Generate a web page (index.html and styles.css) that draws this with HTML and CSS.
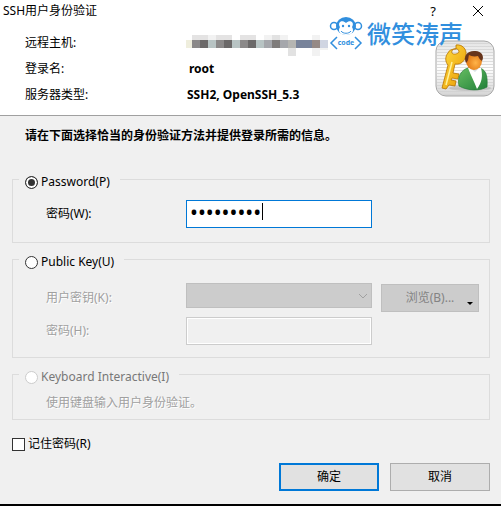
FILE: index.html
```html
<!DOCTYPE html>
<html lang="zh-CN">
<head>
    <meta charset="UTF-8">
    <meta name="viewport" content="width=device-width, initial-scale=1.0">
    <title>SSH用户身份验证</title>
    <link rel="stylesheet" href="styles.css">
</head>
<body>
    <form class="dialog">
        <header class="header">
            <div class="titlebar">
                <h1>SSH用户身份验证</h1>
                <button type="button" class="title-btn" aria-label="帮助">?</button>
                <button type="button" class="title-btn" aria-label="关闭">
                    <svg width="12" height="12" viewBox="0 0 12 12"><path d="M1 1l10 10M11 1L1 11" stroke="#000" fill="none"/></svg>
                </button>
            </div>
            <div class="summary">
                <dl class="info">
                    <dt>远程主机:</dt>
                    <dd>
                        <!-- host address is masked -->
                        <svg class="mask" width="142" height="21" viewBox="0 0 142 21" shape-rendering="crispEdges">
                            <path fill="#e4e3e3" d="M6 0h16v5H6zM30 0h16v5H30zM54 0h16v5H54z"/>
                            <path fill="#f2f2f2" d="M22 0h8v5h-8zM78 0h24v5H78zM126 0h8v5h-8zM126 13h8v8h-8zM134 13h8v2h-8z"/>
                            <path fill="#e2e2e2" d="M86 0h8v5h-8zM102 13h8v8h-8z"/>
                            <path fill="#efeedd" d="M0 5h6v8H0z"/>
                            <path fill="#8b8989" d="M6 5h8v8H6zM30 5h8v8h-8zM54 5h8v8h-8z"/>
                            <path fill="#6b6969" d="M14 5h8v8h-8zM38 5h8v8h-8zM62 5h8v8h-8z"/>
                            <path fill="#b8c4c4" d="M22 5h8v8h-8zM46 5h8v8h-8zM70 5h8v8h-8z"/>
                            <path fill="#a5a7ac" d="M78 5h8v8h-8zM94 5h8v8h-8z"/>
                            <path fill="#7f7c7b" d="M86 5h8v8h-8z"/>
                            <path fill="#b5b5b2" d="M102 5h8v8h-8z"/>
                            <path fill="#78839a" d="M110 5h16v8h-16z"/>
                            <path fill="#958985" d="M126 5h8v8h-8z"/>
                            <path fill="#d0d5e2" d="M134 5h8v8h-8z"/>
                        </svg>
                    </dd>
                    <dt>登录名:</dt>
                    <dd class="login">root</dd>
                    <dt>服务器类型:</dt>
                    <dd>SSH2, OpenSSH_5.3</dd>
                </dl>
                <svg class="user-icon" width="60" height="58" viewBox="0 0 60 58">
                    <defs>
                        <linearGradient id="tile" x1="0" y1="0" x2="0" y2="1">
                            <stop offset="0" stop-color="#e4e4e4"/>
                            <stop offset=".5" stop-color="#fff"/>
                            <stop offset="1" stop-color="#d4d4d4"/>
                        </linearGradient>
                        <linearGradient id="gold" x1="0" y1="0" x2="1" y2="1">
                            <stop offset="0" stop-color="#ffdf43"/>
                            <stop offset="1" stop-color="#e89500"/>
                        </linearGradient>
                        <linearGradient id="jacket" x1="0" y1="0" x2="1" y2="1">
                            <stop offset="0" stop-color="#67bd62"/>
                            <stop offset="1" stop-color="#218039"/>
                        </linearGradient>
                        <radialGradient id="face" cx=".6" cy=".6" r=".6">
                            <stop offset="0" stop-color="#ffb449"/>
                            <stop offset="1" stop-color="#df7310"/>
                        </radialGradient>
                        <pattern id="lines" width="4" height="3" patternUnits="userSpaceOnUse">
                            <path d="M0 .5h4" stroke="#d0d0d0" stroke-width=".7"/>
                        </pattern>
                    </defs>
                    <rect x="1" y="1" width="58" height="55" rx="10" fill="url(#tile)" stroke="#a7a7a7"/>
                    <rect x="2" y="2" width="56" height="53" rx="9" fill="url(#lines)"/>
                    <ellipse cx="35" cy="48" rx="21" ry="3" fill="#aaa" opacity=".5"/>
                    <path fill="url(#gold)" stroke="#b87300" stroke-width=".8" fill-rule="evenodd" d="M21 5c6-1 11 4 10 10-1 6-5 10-11 9l-2 9 6 1-1 5-6-1-1 2 5 1-1 5-6-1-3 4-4-1 6-23c-3-3-3-9 0-12 1-3 4-4 8-4zM22 9c-3-1-6 1-5 4 1 2 6 1 7-1 0-1-1-3-2-3z"/>
                    <path d="M17 22l-6 23" stroke="#fff29a" stroke-width="1.5" fill="none"/>
                    <path fill="url(#jacket)" stroke="#237b36" stroke-width=".7" d="M24 46c-2-9 2-16 9-18h11c6 1 9 6 8 19-7 4-19 4-28-1z"/>
                    <path fill="#fff" d="M33 28h13c2 8 1 14-4 21-3-8-6-13-9-21z"/>
                    <path fill="#d9dfe2" d="M35 28h9l-4 4z"/>
                    <ellipse cx="39" cy="21" rx="8" ry="9" fill="url(#face)"/>
                    <path fill="#67351c" d="M31 23c-3-7 1-12 8-12 7-1 11 5 8 10-2-1-3-3-4-5-4 1-7 0-9-1-1 3 0 5-3 8z"/>
                </svg>
            </div>
            <div class="watermark">
                <svg width="34" height="34" viewBox="0 0 34 34" fill="none" stroke="#318fde">
                    <circle cx="5" cy="9" r="3.500" stroke-width="1.500"/>
                    <circle cx="29" cy="9" r="3.500" stroke-width="1.500"/>
                    <ellipse cx="17" cy="9" rx="10" ry="9" fill="#318fde" stroke="none"/>
                    <path fill="#fff" stroke="none" d="M17 6c4-4 9-1 6 4 3 5-1 8-6 8s-9-3-6-8c-3-5 2-8 6-4z"/>
                    <path d="M12 14c2 3 8 3 10 0" stroke-width="1"/>
                    <circle cx="14" cy="9" r="1.200" fill="#318fde" stroke="none"/>
                    <circle cx="20" cy="9" r="1.200" fill="#318fde" stroke="none"/>
                    <path d="M8 20l-6 6 6 6M26 20l6 6-6 6" stroke-width="1.500"/>
                    <text x="17" y="28" text-anchor="middle" class="code">code</text>
                </svg>
                <span>微笑涛声</span>
            </div>
        </header>

        <main class="content">
            <p class="intro">请在下面选择恰当的身份验证方法并提供登录所需的信息。</p>

            <fieldset class="method-password">
                <legend><label><input type="radio" name="method" checked>Password(P)</label></legend>
                <div class="fields">
                    <label for="password">密码(W):</label>
                    <div class="password-box">
                        <input type="password" id="password" class="text-box" value="123456789" autofocus>
                        <span class="caret"></span>
                    </div>
                </div>
            </fieldset>

            <fieldset class="method-key">
                <legend><label><input type="radio" name="method">Public Key(U)</label></legend>
                <div class="fields disabled">
                    <label for="userKey">用户密钥(K):</label>
                    <select id="userKey" disabled></select>
                    <button type="button" class="browse" disabled>浏览(B)...</button>
                    <label for="passphrase">密码(H):</label>
                    <input type="password" id="passphrase" class="text-box" disabled>
                </div>
            </fieldset>

            <fieldset class="method-keyboard disabled">
                <legend><label><input type="radio" name="method" disabled>Keyboard Interactive(I)</label></legend>
                <p>使用键盘输入用户身份验证。</p>
            </fieldset>

            <label class="remember"><input type="checkbox">记住密码(R)</label>

            <div class="actions">
                <button type="submit" class="ok">确定</button>
                <button type="button">取消</button>
            </div>
        </main>
    </form>
</body>
</html>
```
FILE: styles.css
```css
* {
    box-sizing: border-box;
}
body {
    margin: 0;
    background-color: #f0f0f0;
    color: #000;
    font-family: "Noto Sans", "Noto Sans CJK SC", sans-serif;
    font-size: 12px;
    line-height: 16px;
}
input, button, select {
    font: inherit;
    margin: 0;
}
.dialog {
    border-bottom: 2px solid #000;
}

/* header */
.header {
    position: relative;
    background-color: #fff;
    border-bottom: 1px solid #a0a0a0;
    padding-bottom: 12px;
}
.titlebar {
    display: flex;
    align-items: center;
    height: 22px;
    padding: 0 15px 0 3px;
}
.titlebar h1 {
    flex: 1;
    margin: 0;
    font-size: 12px;
    font-weight: normal;
}
.title-btn {
    display: flex;
    justify-content: center;
    width: 16px;
    margin-left: 29px;
    padding: 0;
    border: none;
    background: none;
    color: #000;
    font-size: 13px;
}
.summary {
    display: flex;
    justify-content: space-between;
    padding: 13px 6px 0 25px;
}
.info {
    display: grid;
    grid-template-columns: 162px auto;
    row-gap: 10px;
    margin: 0;
}
.info dd {
    margin: 0;
    font-weight: bold;
}
.info .login {
    padding-left: 2px;
}
.mask {
    display: block;
    height: 21px;
    margin-bottom: -5px;
    margin-left: -1px;
}
.user-icon {
    margin-top: 5px;
}
.watermark {
    position: absolute;
    top: 17px;
    right: 38px;
    display: flex;
    align-items: center;
    gap: 4px;
    color: #318fde;
    font-size: 24px;
    font-weight: 500;
    line-height: 34px;
}
.code {
    fill: #318fde;
    stroke: none;
    font-size: 7px;
    font-weight: bold;
}

/* authentication methods */
.content {
    padding: 12px 11px 13px 12px;
}
.intro {
    margin: 0 0 25px 13px;
    font-weight: bold;
}
fieldset {
    min-width: 0;
    margin: 0;
    padding: 0 10px 0 33px;
    border: 1px solid #dcdcdc;
}
legend {
    margin-left: -27px;
    padding: 5px 10px 0 6px;
}
legend label, .remember {
    display: flex;
    align-items: center;
    gap: 3px;
}
input[type="radio"], input[type="checkbox"] {
    appearance: none;
    width: 13px;
    height: 13px;
    border: 1px solid #333;
    background-color: #fff;
}
input[type="radio"] {
    border-radius: 50%;
}
input[type="radio"]:checked {
    background-color: #333;
    box-shadow: inset 0 0 0 2px #fff;
}
input[type="radio"]:disabled {
    border-color: #ccc;
}
.fields {
    display: grid;
    grid-template-columns: 131px 1fr 98px;
    gap: 5px 9px;
    align-items: center;
}
.text-box {
    display: block;
    width: 100%;
    height: 28px;
    padding: 0 3px;
    border: 1px solid #ccc;
    border-radius: 0;
    background-color: #fff;
    outline: none;
}
.text-box:focus {
    border-color: #0078d7;
}
.text-box:disabled {
    background-color: #f0f0f0;
    box-shadow: inset 0 0 0 1px #fff;
}
.password-box {
    position: relative;
}
#password {
    padding-bottom: 4px;
    border-color: #0078d7;
    font-size: 21px;
    caret-color: transparent;
}
.caret {
    position: absolute;
    top: 3px;
    left: 76px;
    width: 1px;
    height: 17px;
    background-color: #000;
}
select {
    appearance: none;
    align-self: start;
    width: 100%;
    height: 25px;
    border: 1px solid #bfbfbf;
    border-radius: 0;
    background: #ccc url("data:image/svg+xml,%3Csvg xmlns='http://www.w3.org/2000/svg' width='10' height='6'%3E%3Cpath d='M1 1l4 4 4-4' fill='none' stroke='%23a0a0a0'/%3E%3C/svg%3E") no-repeat right 3px center;
}
select:disabled {
    opacity: 1;
}
.disabled {
    color: #a0a0a0;
    text-shadow: 1px 1px 0 #fff;
}
.disabled legend {
    color: #787878;
    text-shadow: none;
}
.method-password {
    padding-top: 10px;
    padding-bottom: 14px;
    margin-bottom: 6px;
}
.method-key {
    padding-top: 13px;
    padding-bottom: 12px;
    margin-bottom: 6px;
}
.method-keyboard {
    padding-bottom: 8px;
}
.method-keyboard p {
    margin: 10px 0 0;
}
.remember {
    width: fit-content;
    margin-top: 16px;
}

/* buttons */
.browse {
    position: relative;
    height: 28px;
    margin-top: 1px;
    padding: 0;
    border: 1px solid #bfbfbf;
    background-color: #ccc;
    color: #838383;
    text-shadow: none;
}
.browse::after {
    content: "";
    position: absolute;
    right: 5px;
    bottom: 6px;
    border: 3px solid transparent;
    border-top-color: #000;
    border-bottom: none;
}
.actions {
    display: flex;
    justify-content: flex-end;
    gap: 11px;
    margin-top: 11px;
}
.actions button {
    width: 100px;
    height: 28px;
    padding: 0;
    border: 1px solid #adadad;
    background-color: #e1e1e1;
    color: #000;
}
.actions .ok {
    border: 2px solid #0078d7;
}
```
